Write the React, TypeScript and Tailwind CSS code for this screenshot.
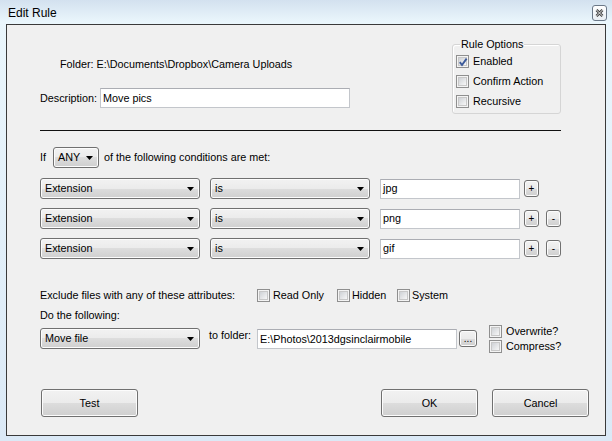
import React from 'react';

const btn =
  'border border-[#707070] rounded-[3px] bg-[linear-gradient(to_bottom,#f2f2f2_0%,#ebebeb_50%,#dddddd_50%,#cfcfcf_100%)] shadow-[inset_0_0_0_1px_#fcfcfc]';

function Check({ checked = false }: { checked?: boolean }) {
  return (
    <span className="relative flex h-[13px] w-[13px] shrink-0 items-center justify-center border border-[#8f8f8f] bg-[#f4f4f4]">
      <span className="block h-[9px] w-[9px] border border-[#c8c8c8] bg-gradient-to-br from-[#cfd2d6] to-[#f7f7f7]" />
      {checked && (
        <svg className="absolute left-[1px] top-[1px]" width="10" height="10" viewBox="0 0 10 10">
          <path d="M1.8 5.2 L4 8 L8.6 1.6" fill="none" stroke="#3c5a9a" strokeWidth="1.9" />
        </svg>
      )}
    </span>
  );
}

function Arrow() {
  return (
    <svg width="7" height="4" viewBox="0 0 7 4">
      <polygon points="0,0 7,0 3.5,4" fill="#000" />
    </svg>
  );
}

function Combo({ value, width }: { value: string; width: string }) {
  return (
    <div className={`${btn} ${width} flex h-[21px] shrink-0 items-center justify-between pl-[4px] pr-[5px]`}>
      <span>{value}</span>
      <Arrow />
    </div>
  );
}

function TextBox({ value, width }: { value: string; width: string }) {
  return (
    <div className={`${width} flex h-[20px] shrink-0 items-center border border-[#c3c6cb] border-t-[#abadb3] bg-white pl-[2px]`}>
      {value}
    </div>
  );
}

function SmallBtn({ label, width = 'w-[15px]' }: { label: string; width?: string }) {
  return (
    <div className={`${btn} ${width} flex h-[17px] shrink-0 items-center justify-center text-[10px] leading-none`}>
      {label}
    </div>
  );
}

function Button({ label }: { label: string }) {
  return (
    <div className={`${btn} flex h-[28px] w-[97px] items-center justify-center`}>{label}</div>
  );
}

const conditions = [
  { value: 'jpg', minus: false },
  { value: 'png', minus: true },
  { value: 'gif', minus: true },
];

export default function App() {
  return (
    <div className="h-[441px] w-[612px] overflow-hidden bg-[linear-gradient(to_bottom,#d3e1ef_0px,#eaf6fc_22px,#dbe9f6_100%)] font-['Liberation_Sans',Arial,sans-serif] text-[10.8px] leading-[13px] text-black">
      {/* Title bar */}
      <div className="flex h-[24px] justify-between pl-[8px] pr-[5px]">
        <span className="mt-[6px] text-[12px] leading-[14px]">Edit Rule</span>
        <div className="mt-[5px] flex h-[16px] w-[15px] items-center justify-center rounded-[3px] border border-[#6b7888] bg-gradient-to-b from-white to-[#e9eef3]">
          <svg width="9" height="8" viewBox="0 0 9 8">
            <path d="M1.5 1 L7.5 7 M7.5 1 L1.5 7" stroke="#3b3b3b" strokeWidth="2.6" />
            <path d="M1.5 1 L7.5 7 M7.5 1 L1.5 7" stroke="#ffffff" strokeWidth="0.9" />
          </svg>
        </div>
      </div>

      {/* Client area */}
      <div className="mx-[6px] flex h-[412px] w-[600px] flex-col border border-[#3a3a3a] bg-[#f0f0f0] pl-[33px]">
        {/* Top: folder, description, rule options */}
        <div className="flex items-start pr-[44px]">
          <div className="flex flex-1 flex-col">
            <div className="ml-[20px] mt-[33px]">Folder: E:\Documents\Dropbox\Camera Uploads</div>
            <div className="mt-[17px] flex items-center">
              <span className="w-[60px]">Description:</span>
              <TextBox value="Move pics" width="w-[250px]" />
            </div>
          </div>
          <div className="relative mt-[19px] h-[70px] w-[109px] rounded-[3px] border border-[#d5d5d5] shadow-[inset_1px_1px_0_#ffffff]">
            <span className="absolute left-[7px] top-[-7px] bg-[#f0f0f0] px-[1px]">Rule Options</span>
            <div className="flex flex-col gap-[7px] pl-[3px] pt-[10px]">
              <label className="flex items-center gap-[4px]">
                <Check checked />
                <span>Enabled</span>
              </label>
              <label className="flex items-center gap-[4px]">
                <Check />
                <span>Confirm Action</span>
              </label>
              <label className="flex items-center gap-[4px]">
                <Check />
                <span>Recursive</span>
              </label>
            </div>
          </div>
        </div>

        {/* Separator */}
        <div className="mt-[16px] h-[1px] w-[521px] bg-[#111]" />

        {/* If row */}
        <div className="mt-[16px] flex h-[21px] items-center">
          <span className="w-[13px]">If</span>
          <Combo value="ANY" width="w-[46px]" />
          <span className="ml-[5px]">of the following conditions are met:</span>
        </div>

        {/* Conditions */}
        <div className="mt-[10px] flex flex-col gap-[9px]">
          {conditions.map((c, idx) => (
            <div key={idx} className="flex h-[21px] items-center">
              <Combo value="Extension" width="w-[160px]" />
              <div className="ml-[10px]">
                <Combo value="is" width="w-[160px]" />
              </div>
              <div className="ml-[10px]">
                <TextBox value={c.value} width="w-[140px]" />
              </div>
              <div className="ml-[4px]">
                <SmallBtn label="+" />
              </div>
              {c.minus && (
                <div className="ml-[7px]">
                  <SmallBtn label="-" />
                </div>
              )}
            </div>
          ))}
        </div>

        {/* Exclude attributes */}
        <div className="mt-[30px] flex h-[13px] items-center">
          <span className="w-[217px]">Exclude files with any of these attributes:</span>
          <label className="flex w-[80px] items-center gap-[3px]">
            <Check />
            <span>Read Only</span>
          </label>
          <label className="flex w-[60px] items-center gap-[2px]">
            <Check />
            <span>Hidden</span>
          </label>
          <label className="flex items-center gap-[2px]">
            <Check />
            <span>System</span>
          </label>
        </div>

        <div className="mt-[7px]">Do the following:</div>

        {/* Action row */}
        <div className="mt-[3px] flex items-start">
          <div className="mt-[3px]">
            <Combo value="Move file" width="w-[160px]" />
          </div>
          <span className="ml-[9px] mt-[4px] w-[48px]">to folder:</span>
          <div className="mt-[4px]">
            <TextBox value="E:\Photos\2013dgsinclairmobile" width="w-[200px]" />
          </div>
          <div className="ml-[2px] mt-[5px]">
            <SmallBtn label="..." width="w-[18px]" />
          </div>
          <div className="ml-[12px] flex flex-col gap-[2px]">
            <label className="flex items-center gap-[4px]">
              <Check />
              <span>Overwrite?</span>
            </label>
            <label className="flex items-center gap-[4px]">
              <Check />
              <span>Compress?</span>
            </label>
          </div>
        </div>

        {/* Buttons */}
        <div className="mt-[36px] flex items-center pl-[1px] pr-[16px]">
          <Button label="Test" />
          <div className="ml-auto flex gap-[14px]">
            <Button label="OK" />
            <Button label="Cancel" />
          </div>
        </div>
      </div>
    </div>
  );
}
